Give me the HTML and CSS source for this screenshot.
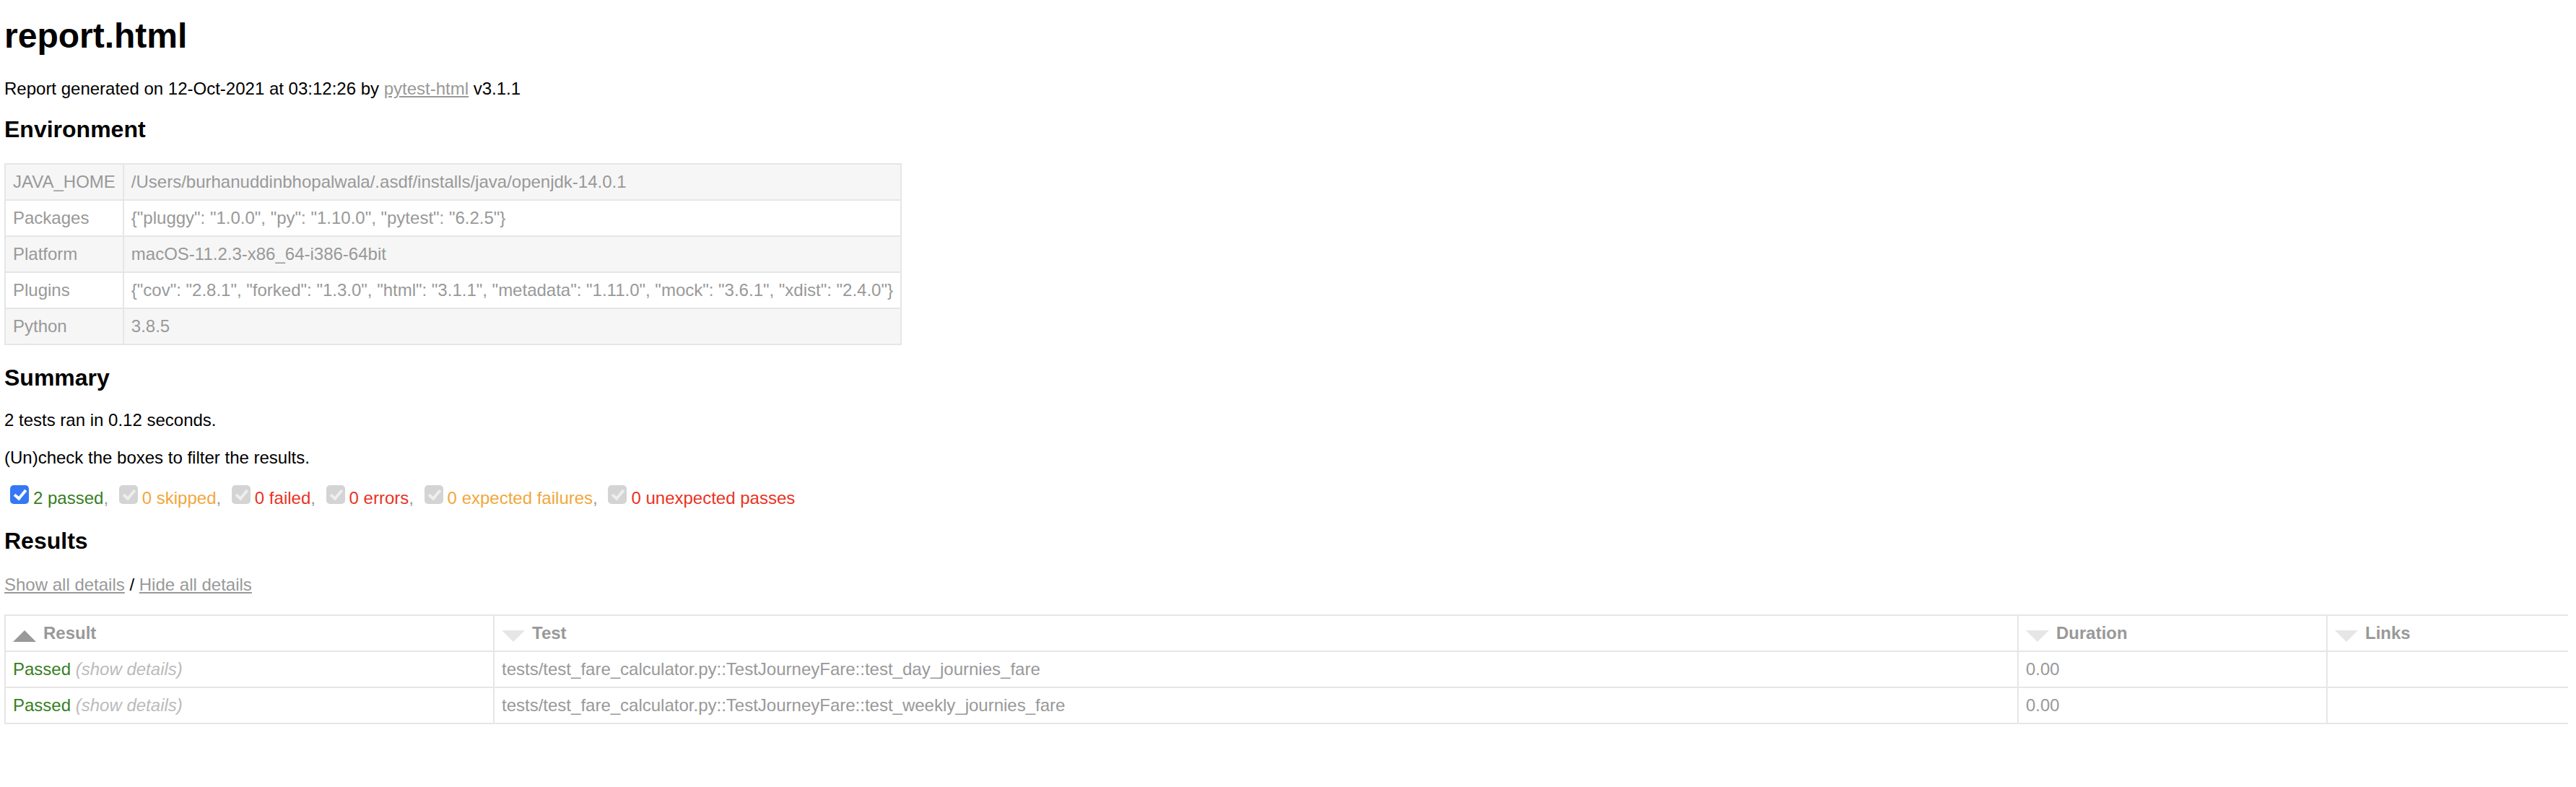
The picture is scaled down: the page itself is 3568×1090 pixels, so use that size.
FILE: index.html
```html
<!DOCTYPE html>
<html>
<head>
<meta charset="utf-8">
<title>Test Report</title>
<link rel="stylesheet" href="styles.css">
</head>
<body>
<h1>report.html</h1>
<p>Report generated on 12-Oct-2021 at 03:12:26 by <a href="#">pytest-html</a> v3.1.1</p>
<h2 class="env-title">Environment</h2>
<table class="environment">
  <tr><td>JAVA_HOME</td><td>/Users/burhanuddinbhopalwala/.asdf/installs/java/openjdk-14.0.1</td></tr>
  <tr><td>Packages</td><td>{"pluggy": "1.0.0", "py": "1.10.0", "pytest": "6.2.5"}</td></tr>
  <tr><td>Platform</td><td>macOS-11.2.3-x86_64-i386-64bit</td></tr>
  <tr><td>Plugins</td><td>{"cov": "2.8.1", "forked": "1.3.0", "html": "3.1.1", "metadata": "1.11.0", "mock": "3.6.1", "xdist": "2.4.0"}</td></tr>
  <tr><td>Python</td><td>3.8.5</td></tr>
</table>
<h2>Summary</h2>
<p>2 tests ran in 0.12 seconds. </p>
<p>(Un)check the boxes to filter the results.</p>
<div class="filters"><span class="checkbox checked"></span><span class="passed">2 passed</span>, <span class="checkbox disabled"></span><span class="skipped">0 skipped</span>, <span class="checkbox disabled"></span><span class="failed">0 failed</span>, <span class="checkbox disabled"></span><span class="error">0 errors</span>, <span class="checkbox disabled"></span><span class="xfailed">0 expected failures</span>, <span class="checkbox disabled"></span><span class="xpassed">0 unexpected passes</span></div>
<h2>Results</h2>
<p class="toggles"><a href="#">Show all details</a> / <a href="#">Hide all details</a></p>
<table class="results-table">
  <colgroup>
    <col class="w-result"><col class="w-name"><col class="w-duration"><col class="w-links">
  </colgroup>
  <thead>
    <tr>
      <th><div class="sort-icon asc"></div>Result</th>
      <th><div class="sort-icon inactive"></div>Test</th>
      <th><div class="sort-icon inactive"></div>Duration</th>
      <th><div class="sort-icon inactive"></div>Links</th>
    </tr>
  </thead>
  <tbody>
    <tr>
      <td class="col-result"><span class="passed-result">Passed</span><span class="expander"> (show details)</span></td>
      <td>tests/test_fare_calculator.py::TestJourneyFare::test_day_journies_fare</td>
      <td>0.00</td>
      <td></td>
    </tr>
    <tr>
      <td class="col-result"><span class="passed-result">Passed</span><span class="expander"> (show details)</span></td>
      <td>tests/test_fare_calculator.py::TestJourneyFare::test_weekly_journies_fare</td>
      <td>0.00</td>
      <td></td>
    </tr>
  </tbody>
</table>
</body>
</html>
```
FILE: styles.css
```css
html { background: #fff; }
body {
  font-family: "Liberation Sans", Arial, sans-serif;
  font-size: 24px;
  color: #999;
  margin: 3px 11px 16px 6px;
}
h1 {
  font-size: 48px;
  color: #000;
  margin: 19px 0 32px;
}
h2 {
  font-size: 32px;
  color: #000;
  margin: 26.5px 0;
}
h2.env-title { margin-top: 23px; margin-bottom: 28px; }
p {
  color: #000;
  margin: 24px 0;
}
p.toggles { margin-top: 28px; margin-bottom: 27px; }
a { color: #999; }
table { border-collapse: collapse; }
.environment td {
  padding: 10px;
  border: 2px solid #e6e6e6;
}
.environment tr:nth-child(odd) { background-color: #f6f6f6; }

.filters { line-height: normal; margin-top: 2px; }
.checkbox {
  display: inline-block;
  position: relative;
  width: 26px;
  height: 26px;
  border-radius: 5px;
  margin: 0 6px 0 8px;
  vertical-align: baseline;
  box-sizing: border-box;
}
.checkbox::after {
  content: "";
  position: absolute;
  left: 9px;
  top: 3px;
  width: 6px;
  height: 13px;
  border-right: 4px solid #fff;
  border-bottom: 4px solid #fff;
  transform: rotate(40deg);
}
.checkbox.checked { background: #3478f6; }
.checkbox.disabled { background: #d4d4d4; }
.checkbox.disabled::after { border-color: #eeeeee; }

.passed, .passed-result { color: #377e22; }
.skipped, .xfailed { color: #f2a73b; }
.failed, .error, .xpassed { color: #ea3323; }

.results-table {
  border: 2px solid #e6e6e6;
  color: #999;
  font-size: 24px;
  width: 100%;
  table-layout: fixed;
}
.results-table th, .results-table td {
  padding: 10px;
  border: 2px solid #e6e6e6;
  text-align: left;
}
.results-table th { font-weight: bold; }
.w-result { width: 677px; }
.w-name { width: 2111px; }
.w-duration { width: 428px; }
.w-links { width: 335px; }
.expander { color: #bbb; font-style: italic; }
.sort-icon {
  font-size: 0;
  float: left;
  margin-right: 10px;
  margin-top: 10px;
  width: 0;
  height: 0;
  border-left: 16px solid transparent;
  border-right: 16px solid transparent;
}
.sort-icon.inactive { border-top: 16px solid #e6e6e6; }
.sort-icon.asc { border-bottom: 16px solid #999; }
```
